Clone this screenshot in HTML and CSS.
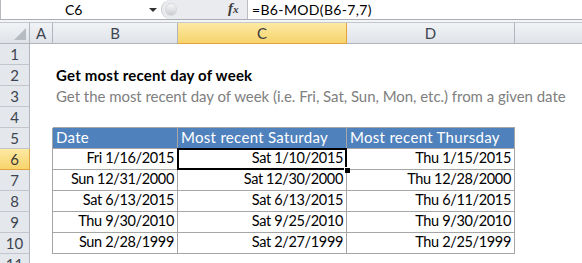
FILE: index.html
```html
<!DOCTYPE html>
<html lang="en">
<head>
    <meta charset="UTF-8">
    <title>Get most recent day of week</title>
    <link rel="stylesheet" href="styles.css">
</head>
<body>

<div class="formula-bar">
    <div class="name-box">
        <span class="name">C6</span>
        <span class="arrow"></span>
    </div>
    <div class="fx-area">
        <span class="knob"></span>
        <span class="fx">f<small>x</small></span>
    </div>
    <div class="formula">=B6-MOD(B6-7,7)</div>
</div>
<div class="bar-gap"></div>

<div class="sheet">
    <div class="row head">
        <div class="corner"><span class="tri"></span></div>
        <div class="col-head">A</div>
        <div class="col-head">B</div>
        <div class="col-head active">C</div>
        <div class="col-head">D</div>
        <div class="col-head last"></div>
    </div>

    <div class="row">
        <div class="row-head">1</div>
        <div class="cell"></div><div class="cell"></div><div class="cell"></div><div class="cell"></div><div class="cell"></div>
    </div>
    <div class="row">
        <div class="row-head">2</div>
        <div class="cell"></div>
        <div class="cell title">Get most recent day of week</div>
        <div class="cell"></div><div class="cell"></div><div class="cell"></div>
    </div>
    <div class="row">
        <div class="row-head">3</div>
        <div class="cell"></div>
        <div class="cell subtitle">Get the most recent day of week (i.e. Fri, Sat, Sun, Mon, etc.) from a given date</div>
        <div class="cell"></div><div class="cell"></div><div class="cell"></div>
    </div>
    <div class="row">
        <div class="row-head">4</div>
        <div class="cell"></div>
        <div class="cell above"></div><div class="cell above"></div><div class="cell above"></div>
        <div class="cell"></div>
    </div>
    <div class="row">
        <div class="row-head">5</div>
        <div class="cell edge"></div>
        <div class="cell th">Date</div>
        <div class="cell th">Most recent Saturday</div>
        <div class="cell th">Most recent Thursday</div>
        <div class="cell"></div>
    </div>
    <div class="row">
        <div class="row-head active">6</div>
        <div class="cell edge"></div>
        <div class="cell td">Fri 1/16/2015</div>
        <div class="cell td selected">Sat 1/10/2015<span class="handle"></span></div>
        <div class="cell td">Thu 1/15/2015</div>
        <div class="cell"></div>
    </div>
    <div class="row">
        <div class="row-head">7</div>
        <div class="cell edge"></div>
        <div class="cell td">Sun 12/31/2000</div>
        <div class="cell td">Sat 12/30/2000</div>
        <div class="cell td">Thu 12/28/2000</div>
        <div class="cell"></div>
    </div>
    <div class="row">
        <div class="row-head">8</div>
        <div class="cell edge"></div>
        <div class="cell td">Sat 6/13/2015</div>
        <div class="cell td">Sat 6/13/2015</div>
        <div class="cell td">Thu 6/11/2015</div>
        <div class="cell"></div>
    </div>
    <div class="row">
        <div class="row-head">9</div>
        <div class="cell edge"></div>
        <div class="cell td">Thu 9/30/2010</div>
        <div class="cell td">Sat 9/25/2010</div>
        <div class="cell td">Thu 9/30/2010</div>
        <div class="cell"></div>
    </div>
    <div class="row">
        <div class="row-head">10</div>
        <div class="cell edge"></div>
        <div class="cell td">Sun 2/28/1999</div>
        <div class="cell td">Sat 2/27/1999</div>
        <div class="cell td">Thu 2/25/1999</div>
        <div class="cell"></div>
    </div>
    <div class="row">
        <div class="row-head">11</div>
        <div class="cell"></div><div class="cell"></div><div class="cell"></div><div class="cell"></div><div class="cell"></div>
    </div>
</div>

</body>
</html>
```

FILE: styles.css
```css
body {
    margin: 0;
    background: #fff;
    font-family: Lato, "Liberation Sans", sans-serif;
    overflow: hidden;
}

/* formula bar */
.formula-bar {
    display: flex;
    height: 19px;
    border-left: 1px solid #b6babf;
    border-bottom: 1px solid #a9aeb4;
    background: #fff;
}

.name-box {
    width: 160px;
    position: relative;
    display: flex;
    align-items: center;
}

.name-box .name {
    margin-left: 64px;
    font-size: 14px;
    color: #000;
}

.arrow {
    position: absolute;
    left: 148px;
    top: 8px;
    border-left: 4px solid transparent;
    border-right: 4px solid transparent;
    border-top: 4px solid #333;
}

.fx-area {
    width: 85px;
    background: #e9ebee;
    border-left: 1px solid #c9ccd0;
    border-radius: 9px 0 0 9px;
    border-right: 1px solid #b9bdc2;
    position: relative;
}

.knob {
    position: absolute;
    left: 3px;
    top: 3px;
    width: 10px;
    height: 11px;
    border-radius: 50%;
    background: linear-gradient(#f8f8f8, #c9ccd0);
    border: 1px solid #d6d8db;
}

.fx {
    position: absolute;
    left: 66px;
    top: 0;
    font-family: "Liberation Serif", serif;
    font-style: italic;
    font-weight: bold;
    font-size: 15px;
    color: #3c3c3c;
}

.fx small {
    font-size: 11px;
}

.formula {
    padding-left: 4px;
    font-size: 14px;
    letter-spacing: 0.35px;
    line-height: 19px;
    color: #000;
}

.bar-gap {
    height: 2px;
    background: #f3f4f6;
    border-bottom: 1px solid #c4c8cd;
}

/* sheet grid */
.row {
    display: grid;
    grid-template-columns: 30px 23px 125px 169px 168px 1fr;
    height: 21px;
}

.row > div {
    box-sizing: border-box;
    height: 21px;
}

.corner,
.col-head,
.row-head {
    background: linear-gradient(#f1f3f6, #dfe3e8);
    border-right: 1px solid #b1b6bd;
    border-bottom: 1px solid #b1b6bd;
    color: #3d4450;
    font-size: 15px;
    display: flex;
    align-items: center;
    justify-content: center;
}

.row-head {
    background: #e4e7ec;
    border-bottom-color: #c2c6cc;
}

.corner {
    position: relative;
}

.tri {
    position: absolute;
    right: 3px;
    bottom: 3px;
    border-left: 12px solid transparent;
    border-bottom: 12px solid #b7bcc3;
}

.col-head.last {
    border-right: none;
}

.col-head.active,
.row-head.active {
    background: linear-gradient(#fce9a3, #f7d46c);
    border-bottom: 1px solid #e2a33e;
    border-right: 1px solid #e2a33e;
    color: #3a3a3a;
}

.cell {
    font-size: 15px;
    color: #000;
    white-space: nowrap;
    display: flex;
    align-items: flex-end;
    padding: 0 3px 2px 3px;
    line-height: 18px;
}

.title {
    font-weight: bold;
    letter-spacing: 0.2px;
}

.subtitle {
    color: #808080;
    letter-spacing: -0.04px;
}

.above {
    border-bottom: 1px solid #a6a6a6;
}

.edge {
    border-right: 1px solid #a6a6a6;
}

.th {
    background: #4f81bd;
    color: #fff;
    letter-spacing: 0.3px;
    border-right: 1px solid #a6a6a6;
    border-bottom: 1px solid #a6a6a6;
}

.td {
    justify-content: flex-end;
    font-size: 14.5px;
    letter-spacing: -0.35px;
    border-right: 1px solid #a6a6a6;
    border-bottom: 1px solid #a6a6a6;
}

.selected {
    position: relative;
}

.selected::before {
    content: "";
    position: absolute;
    left: -1px;
    top: -1px;
    right: -1px;
    bottom: -1px;
    border: 2px solid #000;
}

.handle {
    position: absolute;
    right: -4px;
    bottom: -4px;
    width: 5px;
    height: 5px;
    background: #000;
    border: 1px solid #fff;
    border-width: 1px 0 0 1px;
}
```
